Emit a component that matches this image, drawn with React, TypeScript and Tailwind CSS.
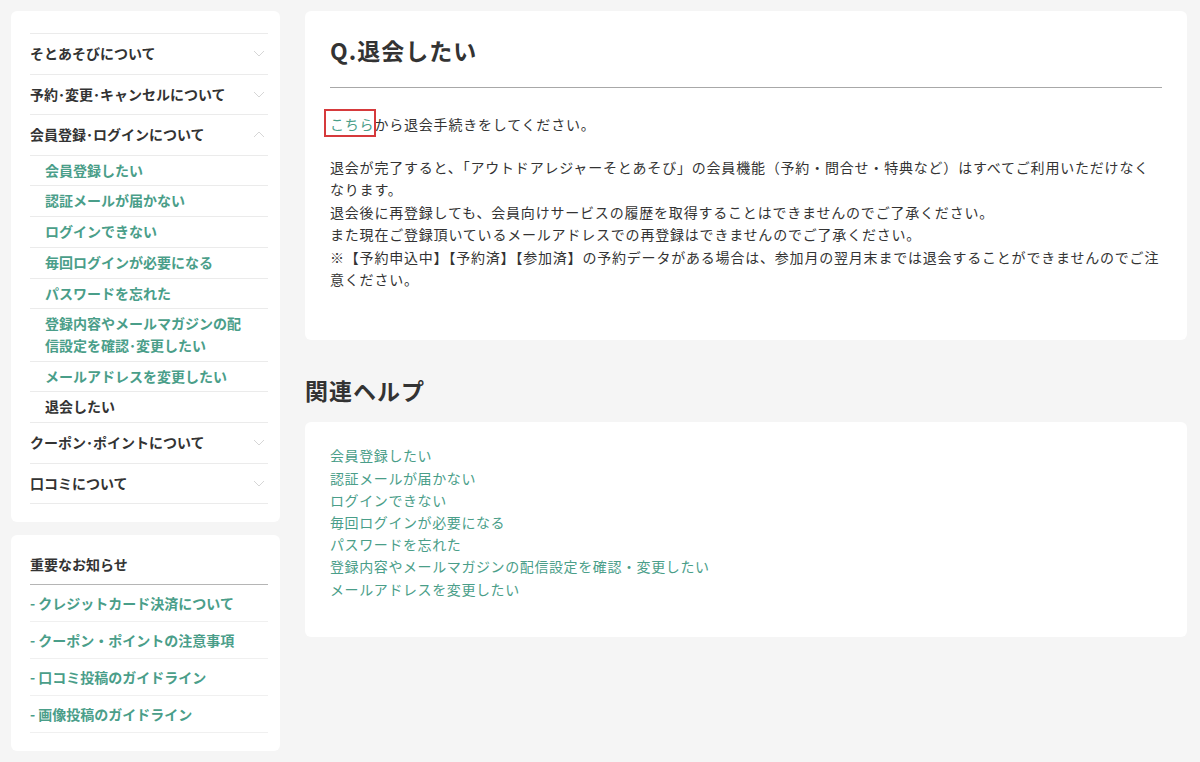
import React from 'react';

const green = 'text-[#4a9e89]';

interface SubItem {
    label: React.ReactNode;
    current?: boolean;
}

const subItems: SubItem[] = [
    { label: '会員登録したい' },
    { label: '認証メールが届かない' },
    { label: 'ログインできない' },
    { label: '毎回ログインが必要になる' },
    { label: 'パスワードを忘れた' },
    { label: <>登録内容やメールマガジンの配<br />信設定を確認･変更したい</> },
    { label: 'メールアドレスを変更したい' },
    { label: '退会したい', current: true },
];

const notices = [
    '- クレジットカード決済について',
    '- クーポン・ポイントの注意事項',
    '- 口コミ投稿のガイドライン',
    '- 画像投稿のガイドライン',
];

const related = [
    '会員登録したい',
    '認証メールが届かない',
    'ログインできない',
    '毎回ログインが必要になる',
    'パスワードを忘れた',
    '登録内容やメールマガジンの配信設定を確認・変更したい',
    'メールアドレスを変更したい',
];

const Chevron: React.FC<{ up?: boolean }> = ({ up }) => (
    <svg width="12" height="7" viewBox="0 0 12 7" className="mr-[3px]">
        <polyline
            points={up ? '1,6 6,1 11,6' : '1,1 6,6 11,1'}
            fill="none"
            stroke="#d6d6d6"
            strokeWidth="1"
        />
    </svg>
);

const TopRow: React.FC<{ label: string; open?: boolean }> = ({ label, open }) => (
    <div className="h-[40.6px] border-b border-[#ebebeb] flex items-center justify-between">
        <span className="font-bold">{label}</span>
        <Chevron up={open} />
    </div>
);

const App: React.FC = () => {
    return (
        <div
            className="min-h-[762px] bg-[#f5f5f5] text-[#333] text-[14px] pt-[11px] pl-[11px] pr-[13px] pb-[12px] flex gap-[25px] items-start"
            style={{ fontFamily: '"Noto Sans CJK JP", "Noto Sans", sans-serif' }}
        >
            {/* sidebar */}
            <div className="w-[269px] shrink-0 flex flex-col gap-[13px]">
                <div className="bg-white rounded-[6px] pl-[19px] pr-[12px] pt-[22px] pb-[18px]">
                    <div className="border-t border-[#ebebeb]">
                        <TopRow label="そとあそびについて" />
                        <TopRow label="予約･変更･キャンセルについて" />
                        <TopRow label="会員登録･ログインについて" open />
                        {subItems.map((s, i) => (
                            <div
                                key={i}
                                className={`border-b border-[#ebebeb] pl-[15px] py-[4px] leading-[21.7px] font-bold ${s.current ? 'text-[#333]' : green}`}
                            >
                                {s.label}
                            </div>
                        ))}
                        <TopRow label="クーポン･ポイントについて" />
                        <TopRow label="口コミについて" />
                    </div>
                </div>

                <div className="bg-white rounded-[6px] pl-[19px] pr-[12px] pt-[18px] pb-[18px]">
                    <div className="font-bold pb-[9px] leading-[22px] border-b border-[#b5b5b5]">重要なお知らせ</div>
                    {notices.map((n) => (
                        <div key={n} className={`h-[37px] flex items-center border-b border-[#f0f0f0] font-bold ${green}`}>
                            {n}
                        </div>
                    ))}
                </div>
            </div>

            {/* main */}
            <div className="flex-1 min-w-0 tracking-[0.8px]">
                <div className="bg-white rounded-[6px] px-[25px] pt-[28px] pb-[50px]">
                    <h1 className="text-[23px] leading-[22px] font-bold tracking-[1px] pb-[26px] border-b border-[#a8a8a8]">
                        Q.退会したい
                    </h1>
                    <p className="mt-[25px] leading-[22px]">
                        <span className={`relative ${green}`}>
                            こちら
                            <span className="absolute -left-[6px] -right-[2px] -top-[5px] -bottom-[3px] border-2 border-[#d63a3c] pointer-events-none" />
                        </span>
                        から退会手続きをしてください。
                    </p>
                    <p className="mt-[21px] leading-[22.4px] whitespace-nowrap">
                        退会が完了すると、「アウトドアレジャーそとあそび」の会員機能（予約・問合せ・特典など）はすべてご利用いただけなく
                        <br />
                        なります。
                        <br />
                        退会後に再登録しても、会員向けサービスの履歴を取得することはできませんのでご了承ください。
                        <br />
                        また現在ご登録頂いているメールアドレスでの再登録はできませんのでご了承ください。
                        <br />
                        ※【予約申込中】【予約済】【参加済】の予約データがある場合は、参加月の翌月末までは退会することができませんのでご注
                        <br />
                        意ください。
                    </p>
                </div>

                <h2 className="mt-[39px] mb-[21px] text-[23px] leading-[22px] font-bold tracking-[1px]">関連ヘルプ</h2>

                <div className="bg-white rounded-[6px] px-[25px] pt-[22px] pb-[37px]">
                    {related.map((r) => (
                        <div key={r} className={`leading-[22.2px] tracking-[0.6px] ${green}`}>
                            {r}
                        </div>
                    ))}
                </div>
            </div>
        </div>
    );
};

export default App;
